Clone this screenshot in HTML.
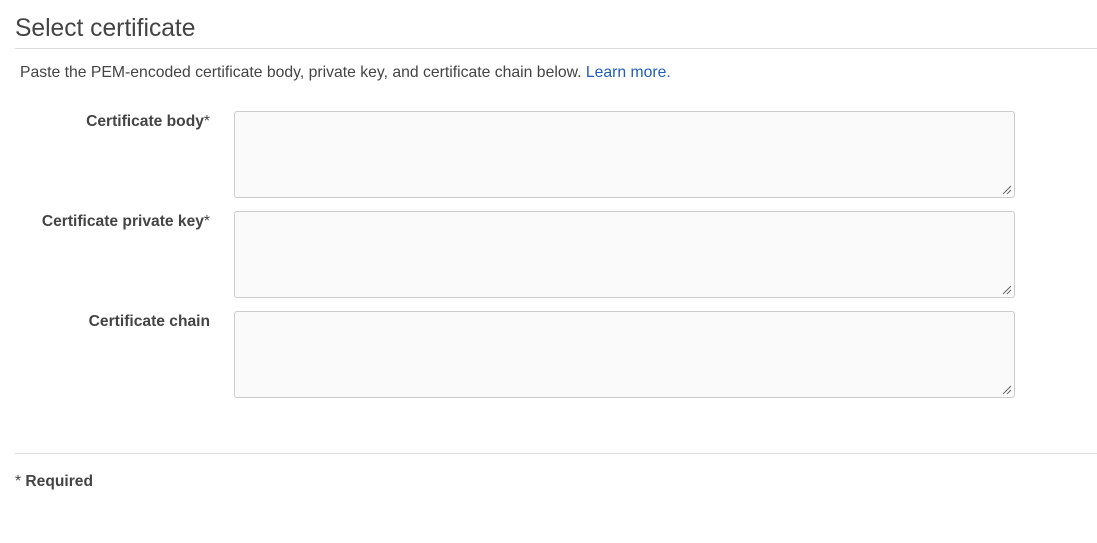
<!DOCTYPE html>
<html><head><style>
body{margin:0;background:#fff;font-family:"Liberation Sans",Arial,sans-serif;color:#444;width:1097px;height:543px;overflow:hidden;position:relative}
.a{position:absolute}
h1{position:absolute;left:15px;top:15px;margin:0;font-size:24.6px;font-weight:normal;color:#444;line-height:28px}
.hr{position:absolute;left:15px;right:0;height:1px;background:#ddd}
p{position:absolute;left:20px;top:64px;margin:0;font-size:15.75px;line-height:17px}
a{color:#1f5dbf;text-decoration:none}
.l{position:absolute;right:887px;font-size:15.6px;font-weight:bold;color:#444;white-space:nowrap;line-height:17px}
.l span{font-weight:normal}
.t{position:absolute;left:234px;width:779px;height:85px;border:1px solid #ccc;border-radius:3px;background:#fafafa}
.t svg{position:absolute;right:2px;bottom:2px}
</style></head><body>
<h1>Select certificate</h1>
<div class="hr" style="top:48px"></div>
<p>Paste the PEM-encoded certificate body, private key, and certificate chain below. <a>Learn more.</a></p>
<div class="l" style="top:113px">Certificate body<span>*</span></div>
<div class="t" style="top:111px"><svg width="10" height="10"><path d="M1 9L9 1M5 9L9 5" stroke="#666" stroke-width="1"/></svg></div>
<div class="l" style="top:213px">Certificate private key<span>*</span></div>
<div class="t" style="top:211px"><svg width="10" height="10"><path d="M1 9L9 1M5 9L9 5" stroke="#666" stroke-width="1"/></svg></div>
<div class="l" style="top:313px">Certificate chain</div>
<div class="t" style="top:311px"><svg width="10" height="10"><path d="M1 9L9 1M5 9L9 5" stroke="#666" stroke-width="1"/></svg></div>
<div class="hr" style="top:453px"></div>
<div class="a" style="left:15px;top:473px;font-size:15.6px;line-height:17px">* <b>Required</b></div>
</body></html>
